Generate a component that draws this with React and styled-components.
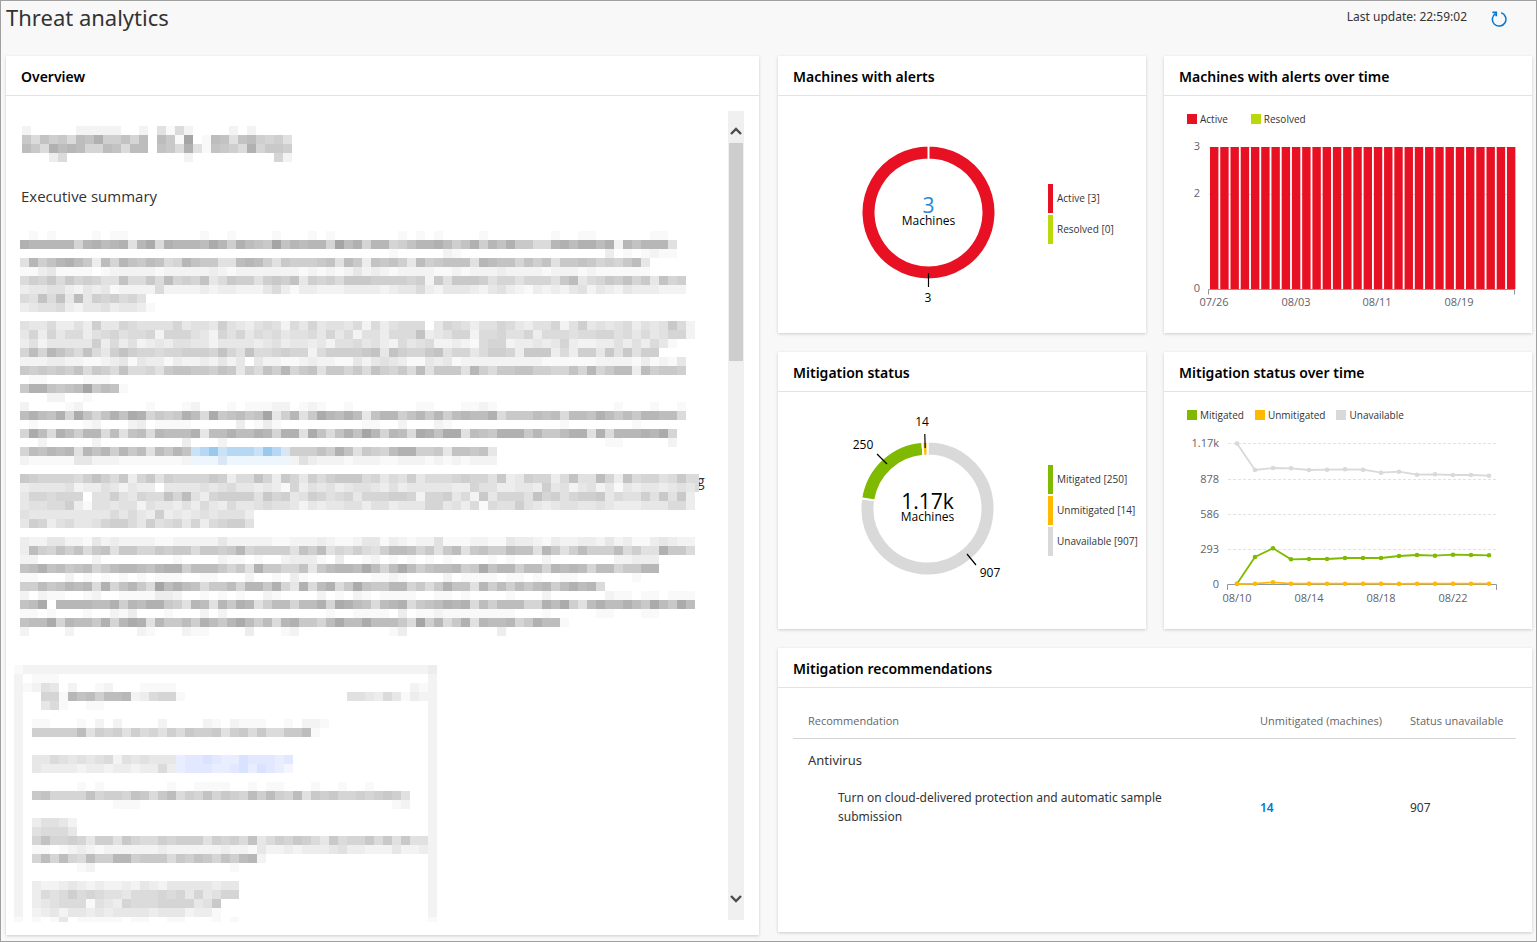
import React from "react";
import styled, { createGlobalStyle } from "styled-components";

const GlobalStyle = createGlobalStyle`
  * { box-sizing: border-box; }
  body {
    margin: 0;
    background: #f8f8f8;
    color: #333;
    font-family: "Open Sans", "Noto Sans", sans-serif;
  }
`;

const Page = styled.main`
  min-height: 100vh;
  border: 1px solid #a0a0a0;
  padding: 0 4px 6px 5px;
`;

const PageHeader = styled.header`
  display: flex;
  justify-content: space-between;
  align-items: flex-start;
  height: 55px;
`;

const PageTitle = styled.h1`
  margin: 0;
  font-family: "Noto Sans", sans-serif;
  font-size: 22px;
  line-height: 32px;
  font-weight: 400;
`;

const UpdateInfo = styled.div`
  display: flex;
  align-items: center;
  gap: 23px;
  padding: 6px 24px 0 0;
  font-family: "Noto Sans", sans-serif;
  font-size: 12px;
  line-height: 20px;
`;

const RefreshButton = styled.button`
  display: flex;
  padding: 4px 0 0;
  border: 0;
  background: none;
  cursor: pointer;
`;

const Dashboard = styled.div`
  display: grid;
  grid-template-columns: minmax(0, 753fr) minmax(0, 754fr);
  gap: 19px;
  align-items: start;
`;

const Widgets = styled.div`
  display: grid;
  grid-template-columns: repeat(2, minmax(0, 1fr));
  gap: 19px 18px;
`;

const Card = styled.section`
  grid-column: ${(p) => (p.$wide ? "1 / -1" : "auto")};
  min-width: 0;
  background: #fff;
  box-shadow: 0 1px 3px rgba(0, 0, 0, 0.18);
`;

const CardTitle = styled.h2`
  margin: 0;
  padding: 0 15px;
  height: 40px;
  border-bottom: 1px solid #e3e3e3;
  color: #000;
  font-family: "Noto Sans", sans-serif;
  font-size: 14px;
  line-height: 41px;
  font-weight: 600;
`;

const ArticleBody = styled.div`
  display: flex;
  justify-content: space-between;
  padding: 15px 15px 13px 8px;
`;

const Article = styled.article`
  display: flex;
  flex-direction: column;
  align-items: flex-start;
  min-width: 0;
  padding-top: 15px;
`;

const ArticleHeading = styled.h3`
  margin: 24px 0 25px;
  padding-left: 7px;
  font-size: 15px;
  line-height: 20px;
  font-weight: 400;
`;

const MosaicSvg = styled.svg`
  display: block;
  margin-left: ${(p) => p.$indent}px;
  margin-bottom: ${(p) => p.$after}px;
`;

const ScrollTrack = styled.div`
  display: flex;
  flex-direction: column;
  flex: none;
  width: 16px;
  margin-bottom: 2px;
  padding: 0 1px;
  background: #f0f0f0;
`;

const ScrollButton = styled.button`
  display: flex;
  align-items: ${(p) => (p.$down ? "flex-start" : "flex-end")};
  justify-content: center;
  height: 32px;
  padding: 7px 0 8px;
  border: 0;
  background: none;
`;

const ScrollThumb = styled.div`
  height: 218px;
  margin-bottom: auto;
  background: #cdcdcd;
`;

const DonutBody = styled.div`
  display: flex;
  align-items: center;
  gap: 20px;
  min-height: 237px;
  padding: 0 0 3px 50px;
`;

const DonutSvg = styled.svg`
  flex: none;
  width: 200px;
  height: 200px;
`;

const BarLegend = styled.ul`
  display: flex;
  flex-direction: column;
  gap: 2px;
  margin: 0;
  padding: 2px 0 0;
  list-style: none;
`;

const BarLegendItem = styled.li`
  padding-left: 4px;
  border-left: 5px solid ${(p) => p.$color};
  font-size: 10px;
  line-height: 29px;
  white-space: nowrap;
`;

const ChartBody = styled.div`
  min-height: 237px;
`;

const ChartLegend = styled.ul`
  display: flex;
  gap: ${(p) => p.$gap}px;
  margin: 0;
  padding: 16px 23px 0;
  list-style: none;
`;

const ChartLegendItem = styled.li`
  display: flex;
  align-items: center;
  gap: 3px;
  font-size: 10px;
  line-height: 14px;

  &::before {
    content: "";
    width: 10px;
    height: 10px;
    background: ${(p) => p.$color};
  }
`;

const ChartSvg = styled.svg`
  display: block;
  width: 100%;
  height: auto;
`;

const TableBody = styled.div`
  min-height: 244px;
  padding: 15px 16px 15px 15px;
`;

const Table = styled.table`
  width: 100%;
  border-collapse: collapse;
  table-layout: fixed;
`;

const Column = styled.col`
  width: ${(p) => p.$width};
`;

const HeadCell = styled.th`
  height: 35px;
  padding: 0 0 0 ${(p) => (p.$first ? 15 : 0)}px;
  border-bottom: 1px solid #d4d4d4;
  color: #666;
  font-size: 11px;
  font-weight: 400;
  text-align: left;
`;

const GroupCell = styled.th`
  height: 44px;
  padding: 0 0 0 15px;
  font-family: "Noto Sans", sans-serif;
  font-size: 13px;
  font-weight: 400;
  text-align: left;
`;

const Cell = styled.td`
  height: 50px;
  padding: 0 0 0 ${(p) => (p.$first ? 45 : 0)}px;
  font-family: "Noto Sans", sans-serif;
  font-size: 12px;
  line-height: 19px;
`;

const CountLink = styled.a`
  color: #0078d4;
  font-weight: 600;
  text-decoration: none;
`;

const CELL = 9;

/* Redaction palettes: 1-f are greys from light to dark, capitals are link tints. */
const TINTS = {
  A: "#eef6fd",
  B: "#d8e7f3",
  C: "#cae2f6",
  D: "#b6d8f4",
  E: "#9ac9ee",
  G: "#f3f6ff",
  H: "#e9eeff",
  I: "#e1e8ff",
  J: "#d9e2ff",
};

const shade = (ch) => {
  if (TINTS[ch]) return TINTS[ch];
  const v = 255 - parseInt(ch, 16) * 6;
  return `rgb(${v},${v},${v})`;
};

const HEADING_ROWS = [
  "2.....22222..2.5162....2.2",
  "96a896bad88a7b.b91f.1ba5ab8785",
  "b96dbcb77ba6bb.a96d51a986d7998",
  "...36.............2.........72",
];

const SUMMARY_ROWS = [
  ".1.1....1.11........1..1....1...1.1.......1.1.1....1.......1..11......11",
  "dccccc7cdbcd5ce6dcccbec8dba9facbcc7fbd7cc" + "78accdb8ad8cad9966cdbddbd2caccc5",
  ".........................................1.....21................3.1.1211",
  "5c8acdb93b7ca9ba67ca9955bcb8598889a5b93a" + "9a84b89aaa5cbaa7a8a599a97879b4",
  "11341111.1222221222223212222222121212423" + "212222112122232222122212111111",
  "68796978755a6696b787a469885898a487869998" + "888782959998577577759b46798a794a78",
  "3445532434122226222232332224631332223333" + "2344632444324532132324524324333222",
  "65a6a4b4878675",
  "345563244534431",
  "",
  "5446335384476555574554854356526474554626" + "35666.47653557643557258454563545962",
  "4737466356756672777542757465645564746255" + "3666a3457726675573666566775646" + "45772",
  "3524444483635234355442444434534434255645" + "326456223216772334347322335353641",
  "7b7ca86a648a8776778887a75a66787726888" + "89a" + "4a8779a57746887399936388495958" + "8",
  "2223322112341433132232424.42211232211424" + "5431143412222222221111112222131214",
  "989898a6986a66759aa998a9486a8c79a599796a" + "8796b59995c8699aa8877a7c79bb3b8998",
  ".11....111",
  "9dda9abf9ba1",
  "...22..1",
  "2....12.......1...12...1.11122.121..1......." + "11...1121............." + "1...1..1",
  "bdbad7ea7adaed7989db6e9ab9af48c59ecbdb4a" + "cc8ac9c8bcbbd6999bab6bbadb9b9ccbb6",
  ".1.....12...23.1111.....3.131.........11..2...21............1.......1",
  "7eb6db8cc6b5ab6cbbbd4bbdbbdc7dd5ea6adafc" + "7cb6edaee5ba9ddd9c99bdd5d6cccdce7",
  "..2.....2.........3...2..........................................11.....2",
  "7bacbc5cac8c9b5b9ca" + "CDECDDDCEDB" + "888a8da598" + "7bdd8894aa9a4",
  "2111114422211111112" + "AAABAAAAAAA" + "2532221222" + "1122212121222",
  "",
  "98777768a86937958777" + "798366a7397486899967" + "4658466678775934877" + "36a55b73a67756966",
  "344445233542433.4444" + "54564434317354534554" + "353444443375533443845" + "245241434434546",
  "4776777.55854766a7b5" + "37888859784587567477" + "78872778462947775a7857889465585959" + "3",
  "4556683155455254435364364456554243445535" + "53444774536165585434554454333444663",
  "54444444446464383434545553",
  "48735644578864856747367885",
  "",
  "3224422142322221122222422222112223211244" + "13212251112211433213223324231134322",
  "3b87a8a69a59977989969989c788885a8b576865" + "8bba7959b59a88baa5c958b888b6855d996",
  "22......2........1....211.1..23331.3..12.1.1.1.1....1.1...2.......22333",
  "abdab9ab79bccbacdd8bbb9795d9977a49bccbeb" + "7beb8abbc89eacc8bb7cbcb7bb799cc",
  "11...2.1.1.1.1.111..11...2..1.31.......1121....2.1111.11.1..11......1",
  "88b9acbc6d7ac96fbdba699b7cc9d74d6bd69ea9" + "9cc7969daa5c8b8b9bc8bdbc6",
  "2.211..12..1111332..1.1.1..21....2.1.21.1111..11.1....1...2......211.11.111",
  "abe.ccccbbd8cbdd985cb5c9dc58bb7bbd7edba6" + "bcd69abdcd6b8bbb77dbe85bdbbdb9eb9eb",
  "11.1...1..213...1...2.2...........1..1111.3.11211111111...1.....11...11",
  "abbe7cbb9d7ced5c99b8db9ceb8b6cd997bebbeb" + "bb96f8c69d5cbbc79dbb1",
  "2....2.......21...211....3...12..........13..........3",
];

const bar = (inner) => "2" + inner.padEnd(45, ".") + "2";

const FIGURE_ROWS = [
  "1" + "2".repeat(45) + "3",
  bar(".111"),
  bar("1254.2..12...1111".padEnd(43, ".") + "21"),
  bar("..771cab8bbc236771".padEnd(36, ".") + "554364132"),
  bar("..461..11"),
  bar(""),
  bar(".11...1.2.2....2....21.2111..1.221"),
  bar(".88888b58785867586988958969669" + "9b1"),
  bar(""),
  bar(""),
  bar(".4465454562545444" + "HIIJIHHJIIIHI"),
  bar(".4333323323323363" + "HIIIHHIJHJIHG"),
  bar(""),
  bar("......1.1.......1..1111..1.11...1..1..1"),
  bar(".9a7777a7887a969b687a7987b8b87b598977878985"),
  bar("..........111............................12"),
  bar(""),
  bar(".35542"),
  bar(".56664"),
  bar(".7a778748859766878885" + "8786a46879864967796" + "95955"),
  bar(".11.12321222222322222" + "23221422323334533222" + "4223"),
  bar(".7b7b76b88cc8999698a97a8bc2"),
  bar("......12...............1"),
  bar(""),
  bar(".32234323223243244444344"),
  bar(".36568676554666767474577"),
  bar(".345666154376667777459"),
  bar(".234244343444434442331"),
  "1.1.14.11111.11..11...1.1".padEnd(46, ".") + "1",
];

function Mosaic({ rows, width, height, indent, after = 0, label, children }) {
  return (
    <MosaicSvg
      width={width}
      height={height}
      $indent={indent}
      $after={after}
      role="img"
      aria-label={label}
      shapeRendering="crispEdges"
    >
      {children}
      {rows.flatMap((row, y) =>
        [...row].map((ch, x) =>
          ch === "." ? null : (
            <rect
              key={`${x}-${y}`}
              x={x * CELL}
              y={y * CELL}
              width={x === 75 ? 4 : CELL}
              height={CELL}
              fill={shade(ch)}
            />
          )
        )
      )}
    </MosaicSvg>
  );
}

function Chevron({ down }) {
  return (
    <svg width="12" height="8" viewBox="0 0 12 8" fill="none" stroke="#4d4d4d" strokeWidth="2.4">
      <path d={down ? "M1 1l5 5 5-5" : "M1 7l5-5 5 5"} />
    </svg>
  );
}

function arc(cx, cy, from, to) {
  const at = (r, deg) => {
    const a = ((deg - 90) * Math.PI) / 180;
    return `${cx + r * Math.cos(a)} ${cy + r * Math.sin(a)}`;
  };
  const large = to - from > 180 ? 1 : 0;
  return `M${at(67, from)}A67 67 0 ${large} 1 ${at(67, to)}L${at(53, to)}A53 53 0 ${large} 0 ${at(53, from)}Z`;
}

function Donut({ cx, slices, total, totalColor, pointers, legend }) {
  return (
    <DonutBody>
      <DonutSvg viewBox="0 0 200 200" role="img" aria-label={`${total} machines`}>
        {slices.map((s) => (
          <path key={s.from} d={arc(cx, 99.5, s.from, s.to)} fill={s.color} stroke="#fff" strokeWidth="2" />
        ))}
        {pointers.map((p) => (
          <g key={p.label}>
            <path d={p.line} stroke="#000" strokeWidth="1.2" />
            <text x={p.x} y={p.y} fontSize="12" textAnchor="middle" fill="#000">
              {p.label}
            </text>
          </g>
        ))}
        <text x={cx} y="100" fontSize="21" textAnchor="middle" fill={totalColor}>
          {total}
        </text>
        <text x={cx} y="112" fontSize="12" textAnchor="middle" fill="#000">
          Machines
        </text>
      </DonutSvg>
      <BarLegend>
        {legend.map(([color, text]) => (
          <BarLegendItem key={text} $color={color}>
            {text}
          </BarLegendItem>
        ))}
      </BarLegend>
    </DonutBody>
  );
}

function Legend({ items, gap }) {
  return (
    <ChartLegend $gap={gap}>
      {items.map(([color, text]) => (
        <ChartLegendItem key={text} $color={color}>
          {text}
        </ChartLegendItem>
      ))}
    </ChartLegend>
  );
}

function AxisLabels({ xs, ys, xBase, yRight }) {
  return (
    <g fontSize="11" fill="#5f636b">
      {ys.map(([y, text]) => (
        <text key={text} x={yRight} y={y} textAnchor="end">
          {text}
        </text>
      ))}
      {xs.map(([x, text]) => (
        <text key={text} x={x} y={xBase} textAnchor="middle">
          {text}
        </text>
      ))}
    </g>
  );
}

function AlertsChart() {
  return (
    <ChartSvg viewBox="0 0 368 200" role="img" aria-label="Machines with alerts over time">
      <path d="M45 21.5H351M45 68.5H351" stroke="#ddd" strokeDasharray="2 2" />
      {Array.from({ length: 30 }, (_, i) => (
        <rect key={i} x={46 + i * 10.24} y="21" width="8.4" height="142" fill="#e81123" />
      ))}
      <path d="M44.5 168.5V163.5H350.5V168.5" fill="none" stroke="#8f96a3" />
      <AxisLabels
        yRight={36}
        ys={[[24, "3"], [71, "2"], [166, "0"]]}
        xBase={180}
        xs={[[50, "07/26"], [132, "08/03"], [213, "08/11"], [295, "08/19"]]}
      />
    </ChartSvg>
  );
}

const SERIES = [
  ["#d9d9d9", [22.5, 49, 47, 47.3, 49, 48.7, 48.3, 48.7, 51.7, 50.7, 53.7, 53.3, 54, 54, 54.7]],
  ["#7fba00", [162.7, 136, 127.3, 138.3, 138, 138, 137, 137, 137, 135, 134, 134.7, 133.7, 134, 134.3]],
  ["#ffb900", [163, 162.7, 161.3, 162.7, 162.7, 162.7, 162.7, 162.7, 162.7, 162.9, 162.7, 162.7, 162.7, 162.7, 162.7]],
];

function MitigationChart() {
  return (
    <ChartSvg viewBox="0 1 368 200" role="img" aria-label="Mitigation status over time">
      <path
        d="M64 22.5H333M64 58.5H333M64 93.5H333M64 128.5H333"
        stroke="#e2e2e2"
        strokeDasharray="3 2"
      />
      <path d="M63.5 169V163.5H332.5V169" fill="none" stroke="#8f96a3" />
      {SERIES.map(([color, ys]) => (
        <g key={color} fill={color}>
          <polyline
            points={ys.map((y, i) => `${73 + i * 18},${y}`).join(" ")}
            fill="none"
            stroke={color}
            strokeWidth="1.8"
          />
          {ys.map((y, i) => (
            <circle key={i} cx={73 + i * 18} cy={y} r="2.3" />
          ))}
        </g>
      ))}
      <AxisLabels
        yRight={55}
        ys={[[26, "1.17k"], [62, "878"], [97, "586"], [132, "293"], [167, "0"]]}
        xBase={181}
        xs={[[73, "08/10"], [145, "08/14"], [217, "08/18"], [289, "08/22"]]}
      />
    </ChartSvg>
  );
}

export default function App() {
  return (
    <>
      <GlobalStyle />
      <Page>
        <PageHeader>
          <PageTitle>Threat analytics</PageTitle>
          <UpdateInfo>
            <span>Last update: 22:59:02</span>
            <RefreshButton aria-label="Refresh">
              <svg width="18" height="16" viewBox="0 0 18 16" fill="none" stroke="#0078d4" strokeWidth="1.5">
                <path d="M11.2 1.8A6.8 6.8 0 1 1 5.4 2.6" />
                <path d="M2.4 1.4H6.2V5.2" strokeWidth="1.8" />
              </svg>
            </RefreshButton>
          </UpdateInfo>
        </PageHeader>

        <Dashboard>
          <Card>
            <CardTitle>Overview</CardTitle>
            <ArticleBody>
              <Article>
                <Mosaic rows={HEADING_ROWS} width={270} height={36} indent={8} label="Redacted title" />
                <ArticleHeading>Executive summary</ArticleHeading>
                <Mosaic rows={SUMMARY_ROWS} width={688} height={405} indent={6} after={29} label="Redacted text">
                  <text x="677" y="255" fontSize="14" fill="#333">
                    g
                  </text>
                </Mosaic>
                <Mosaic rows={FIGURE_ROWS} width={423} height={257} indent={0} label="Redacted figure" />
              </Article>
              <ScrollTrack>
                <ScrollButton aria-label="Scroll up">
                  <Chevron />
                </ScrollButton>
                <ScrollThumb />
                <ScrollButton $down aria-label="Scroll down">
                  <Chevron down />
                </ScrollButton>
              </ScrollTrack>
            </ArticleBody>
          </Card>

          <Widgets>
            <Card>
              <CardTitle>Machines with alerts</CardTitle>
              <Donut
                cx={100.5}
                total="3"
                totalColor="#2b88d8"
                slices={[{ from: 0, to: 359.99, color: "#e81123" }]}
                pointers={[{ label: "3", line: "M100.5 160V174", x: 100, y: 189 }]}
                legend={[["#e81123", "Active [3]"], ["#bad80a", "Resolved [0]"]]}
              />
            </Card>
            <Card>
              <CardTitle>Machines with alerts over time</CardTitle>
              <ChartBody>
                <Legend gap={23} items={[["#e81123", "Active"], ["#bad80a", "Resolved"]]} />
                <AlertsChart />
              </ChartBody>
            </Card>
            <Card>
              <CardTitle>Mitigation status</CardTitle>
              <Donut
                cx={99.5}
                total="1.17k"
                totalColor="#000"
                slices={[
                  { from: 0, to: 278.8, color: "#d9d9d9" },
                  { from: 278.8, to: 355.6, color: "#7fba00" },
                  { from: 355.6, to: 360, color: "#ffb900" },
                ]}
                pointers={[
                  { label: "14", line: "M96.8 25L97.2 39", x: 94, y: 17 },
                  { label: "250", line: "M49 45L59 55", x: 35, y: 40 },
                  { label: "907", line: "M139 145L148 156", x: 162, y: 168 },
                ]}
                legend={[
                  ["#7fba00", "Mitigated [250]"],
                  ["#ffb900", "Unmitigated [14]"],
                  ["#d9d9d9", "Unavailable [907]"],
                ]}
              />
            </Card>
            <Card>
              <CardTitle>Mitigation status over time</CardTitle>
              <ChartBody>
                <Legend
                  gap={11}
                  items={[["#7fba00", "Mitigated"], ["#ffb900", "Unmitigated"], ["#d9d9d9", "Unavailable"]]}
                />
                <MitigationChart />
              </ChartBody>
            </Card>
            <Card $wide>
              <CardTitle>Mitigation recommendations</CardTitle>
              <TableBody>
                <Table>
                  <colgroup>
                    <Column $width="auto" />
                    <Column $width="150px" />
                    <Column $width="106px" />
                  </colgroup>
                  <thead>
                    <tr>
                      <HeadCell $first scope="col">Recommendation</HeadCell>
                      <HeadCell scope="col">Unmitigated (machines)</HeadCell>
                      <HeadCell scope="col">Status unavailable</HeadCell>
                    </tr>
                  </thead>
                  <tbody>
                    <tr>
                      <GroupCell colSpan={3} scope="colgroup">Antivirus</GroupCell>
                    </tr>
                    <tr>
                      <Cell $first>
                        Turn on cloud-delivered protection and automatic sample
                        <br />
                        submission
                      </Cell>
                      <Cell>
                        <CountLink href="#unmitigated">14</CountLink>
                      </Cell>
                      <Cell>907</Cell>
                    </tr>
                  </tbody>
                </Table>
              </TableBody>
            </Card>
          </Widgets>
        </Dashboard>
      </Page>
    </>
  );
}
